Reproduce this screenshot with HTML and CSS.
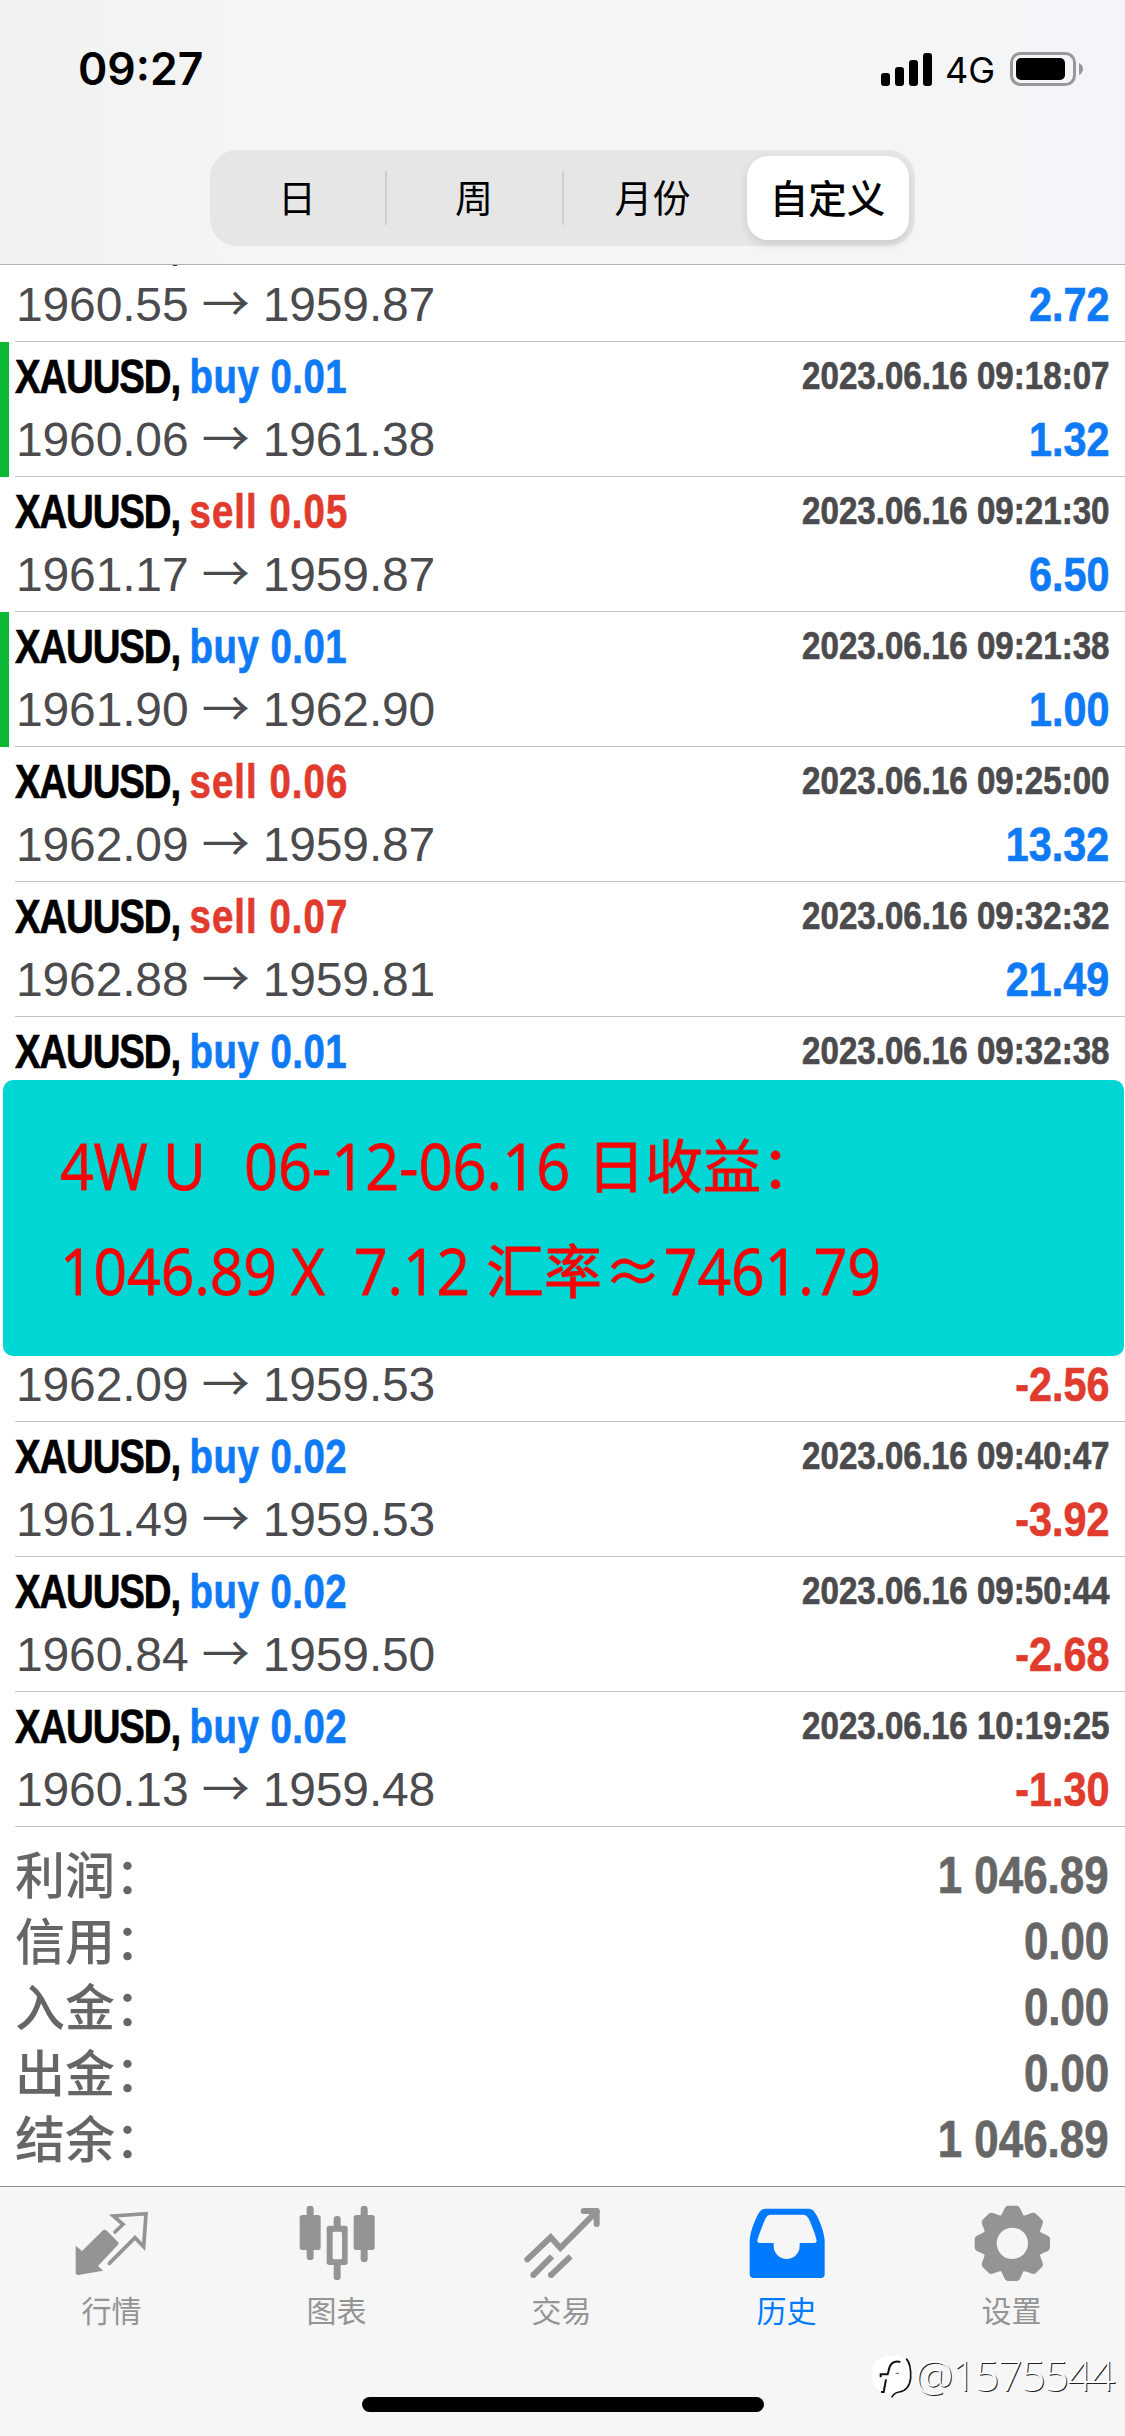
FILE: index.html
```html
<!DOCTYPE html>
<html lang="zh-CN">
  <head>
    <meta charset="UTF-8" />
    <meta name="viewport" content="width=device-width, initial-scale=1.0" />
    <title>历史</title>
    <link rel="stylesheet" href="styles.css" />
  </head>
  <body>
    <header class="header">
      <div class="status">
        <span class="clock">09:27</span>
        <div class="status-right">
          <svg class="signal" width="52" height="33" viewBox="0 0 52 33">
            <rect x="0" y="20" width="9" height="13" rx="3" />
            <rect x="14" y="14" width="9" height="19" rx="3" />
            <rect x="28" y="7" width="9" height="26" rx="3" />
            <rect x="42" y="0" width="9" height="33" rx="3" />
          </svg>
          <span class="network">4G</span>
          <svg class="battery" width="74" height="35" viewBox="0 0 74 35">
            <rect x="1.5" y="1.5" width="63" height="31" rx="9" fill="none" stroke="#98989a" stroke-width="3" />
            <rect x="6" y="6" width="49" height="22" rx="5" />
            <path d="M69 11 Q73 13 73 17 Q73 21 69 23Z" fill="#98989a" />
          </svg>
        </div>
      </div>
      <div class="segment">
        <span class="seg">日</span>
        <span class="seg split">周</span>
        <span class="seg split">月份</span>
        <span class="seg active">自定义</span>
      </div>
    </header>

    <main>
      <!-- Deals above the note -->
      <section class="deals">
        <div class="deal first"><div class="inner">
          <div class="line top"><span class="name">XAUUSD,</span></div>
          <div class="line"><span class="price">1960.55 <i>→</i> 1959.87</span><b class="blue">2.72</b></div>
        </div></div>
        <div class="deal tp"><div class="inner">
          <div class="line top"><span class="name">XAUUSD, <em class="blue">buy 0.01</em></span><time>2023.06.16 09:18:07</time></div>
          <div class="line"><span class="price">1960.06 <i>→</i> 1961.38</span><b class="blue">1.32</b></div>
        </div></div>
        <div class="deal"><div class="inner">
          <div class="line top"><span class="name">XAUUSD, <em class="red">sell 0.05</em></span><time>2023.06.16 09:21:30</time></div>
          <div class="line"><span class="price">1961.17 <i>→</i> 1959.87</span><b class="blue">6.50</b></div>
        </div></div>
        <div class="deal tp"><div class="inner">
          <div class="line top"><span class="name">XAUUSD, <em class="blue">buy 0.01</em></span><time>2023.06.16 09:21:38</time></div>
          <div class="line"><span class="price">1961.90 <i>→</i> 1962.90</span><b class="blue">1.00</b></div>
        </div></div>
        <div class="deal"><div class="inner">
          <div class="line top"><span class="name">XAUUSD, <em class="red">sell 0.06</em></span><time>2023.06.16 09:25:00</time></div>
          <div class="line"><span class="price">1962.09 <i>→</i> 1959.87</span><b class="blue">13.32</b></div>
        </div></div>
        <div class="deal"><div class="inner">
          <div class="line top"><span class="name">XAUUSD, <em class="red">sell 0.07</em></span><time>2023.06.16 09:32:32</time></div>
          <div class="line"><span class="price">1962.88 <i>→</i> 1959.81</span><b class="blue">21.49</b></div>
        </div></div>
        <div class="deal cut"><div class="inner">
          <div class="line top"><span class="name">XAUUSD, <em class="blue">buy 0.01</em></span><time>2023.06.16 09:32:38</time></div>
        </div></div>
      </section>

      <div class="note">
        <p><span class="n1">4W U</span><span class="n2">06-12-06.16</span><span class="cjk">日收益：</span></p>
        <p><span class="n3">1046.89</span><span class="n4">X</span><span class="n5">7.12</span><span class="n6 cjk">汇率</span><span class="n7 cjk">≈</span><span class="n8">7461.79</span></p>
      </div>

      <!-- Deals below the note -->
      <section class="deals">
        <div class="deal"><div class="inner">
          <div class="line"><span class="price">1962.09 <i>→</i> 1959.53</span><b class="red">-2.56</b></div>
        </div></div>
        <div class="deal"><div class="inner">
          <div class="line top"><span class="name">XAUUSD, <em class="blue">buy 0.02</em></span><time>2023.06.16 09:40:47</time></div>
          <div class="line"><span class="price">1961.49 <i>→</i> 1959.53</span><b class="red">-3.92</b></div>
        </div></div>
        <div class="deal"><div class="inner">
          <div class="line top"><span class="name">XAUUSD, <em class="blue">buy 0.02</em></span><time>2023.06.16 09:50:44</time></div>
          <div class="line"><span class="price">1960.84 <i>→</i> 1959.50</span><b class="red">-2.68</b></div>
        </div></div>
        <div class="deal"><div class="inner">
          <div class="line top"><span class="name">XAUUSD, <em class="blue">buy 0.02</em></span><time>2023.06.16 10:19:25</time></div>
          <div class="line"><span class="price">1960.13 <i>→</i> 1959.48</span><b class="red">-1.30</b></div>
        </div></div>
      </section>

      <section class="summary">
        <div class="sum"><span>利润：</span><b>1 046.89</b></div>
        <div class="sum"><span>信用：</span><b>0.00</b></div>
        <div class="sum"><span>入金：</span><b>0.00</b></div>
        <div class="sum"><span>出金：</span><b>0.00</b></div>
        <div class="sum"><span>结余：</span><b>1 046.89</b></div>
      </section>
    </main>

    <footer class="footer">
      <nav class="tabs">
        <div class="tab">
          <svg viewBox="0 0 252 252">
            <path d="M17 137 L36 153 L99 91 Q104 87 109 91 L144 126 Q148 130 144 134 L84 198 L99 212 L25 225 Q17 226 17 218Z" />
            <path d="M135 96 L159 73 L130 48 L228 41 L221 140 L195 113 L118 190" fill="none" stroke="currentColor" stroke-width="11" stroke-linecap="round" />
          </svg>
          <span>行情</span>
        </div>
        <div class="tab">
          <svg viewBox="0 0 252 252">
            <rect x="35" y="17" width="21" height="163" rx="10" />
            <rect x="14" y="45" width="63" height="105" rx="8" />
            <rect x="116" y="48" width="21" height="192" rx="10" />
            <rect x="95" y="77" width="63" height="118" rx="8" />
            <rect x="113" y="95" width="28" height="83" rx="5" fill="#f6f6f6" />
            <rect x="197" y="17" width="21" height="169" rx="10" />
            <rect x="176" y="45" width="63" height="105" rx="8" />
          </svg>
          <span>图表</span>
        </div>
        <div class="tab">
          <svg viewBox="0 0 252 252">
            <g fill="none" stroke="currentColor" stroke-width="18">
              <path d="M22 178 L92 112 L121 144 L230 34" stroke-linecap="round" />
              <path d="M191 33 H230 V72" stroke-linecap="round" stroke-linejoin="round" />
              <path d="M39 226 L96 169" />
              <path d="M92 226 L152 169" />
            </g>
            <circle cx="40" cy="225" r="9" />
            <circle cx="93" cy="225" r="9" />
          </svg>
          <span>交易</span>
        </div>
        <div class="tab active">
          <svg viewBox="0 0 252 252">
            <path fill-rule="evenodd" d="M14 222 V124 C14 98 31 56 42 38 Q50 26 62 26 H191 Q203 26 210 38 C222 56 239 98 239 124 V222 Q239 234 227 234 H26 Q14 234 14 222Z M78 44 H174 Q184 44 190 54 C200 75 213 108 215 122 Q215 129 208 129 H164 V138 A39 39 0 0 1 86 138 V129 H44 Q37 129 37 122 C40 108 53 75 62 54 Q68 44 78 44Z" />
          </svg>
          <span>历史</span>
        </div>
        <div class="tab">
          <svg viewBox="0 0 252 252">
            <defs>
              <path id="tooth" d="M85 56 Q96 45 100 33 Q105 18 113 17 H141 Q149 18 154 33 Q158 45 169 56 L127 130Z" />
            </defs>
            <circle cx="127" cy="130" r="86" />
            <use href="#tooth" />
            <use href="#tooth" transform="rotate(45 127 130)" />
            <use href="#tooth" transform="rotate(90 127 130)" />
            <use href="#tooth" transform="rotate(135 127 130)" />
            <use href="#tooth" transform="rotate(180 127 130)" />
            <use href="#tooth" transform="rotate(225 127 130)" />
            <use href="#tooth" transform="rotate(270 127 130)" />
            <use href="#tooth" transform="rotate(315 127 130)" />
            <circle cx="127" cy="130" r="47" fill="#f6f6f6" />
          </svg>
          <span>设置</span>
        </div>
      </nav>
      <div class="home-bar"></div>
      <div class="watermark">
        <svg width="44" height="46" viewBox="0 0 132 138">
          <path d="M60 5 C95 2 118 18 118 60 C118 95 100 112 82 114 Q70 116 62 128 L58 116 C20 118 2 95 3 60 C4 22 25 6 60 5Z" fill="#fff" />
          <path d="M106 14 C118 28 120 50 119 72 C116 100 100 112 84 114 Q70 116 62 130" fill="none" stroke="#111" stroke-width="5" />
          <path d="M88 24 C66 18 56 32 53 50 L50 61 H29 V70 M45 76 L38 114 H30" fill="none" stroke="#111" stroke-width="6" />
          <path d="M74 58 H84" stroke="#555" stroke-width="3" />
        </svg>
        <span>@1575544</span>
      </div>
    </footer>
  </body>
</html>
```
FILE: styles.css
```css
* {
  box-sizing: border-box;
}
body {
  margin: 0;
  width: 1125px;
  height: 2436px;
  overflow: hidden;
  background-color: #fff;
  color: #000;
  font-family: "Liberation Sans", "Noto Sans CJK SC", sans-serif;
}
p {
  margin: 0;
}
i,
em {
  font-style: normal;
}
.blue {
  color: #0f7af5;
}
.red {
  color: #e03b2d;
}

/* Header */
.header {
  height: 265px;
  border-bottom: 1px solid #b2b2b4;
  background: linear-gradient(90deg, #f0f1f0, #f5f5f6 22%, #f5f5f5 85%, #f3f5fb);
}
.status {
  height: 150px;
  padding: 51px 41px 0 78px;
  display: flex;
  justify-content: space-between;
  align-items: flex-start;
}
.clock {
  font-family: Inter, sans-serif;
  font-weight: 600;
  font-size: 44.5px;
  line-height: 36px;
}
.status-right {
  display: flex;
  align-items: flex-start;
}
.signal {
  margin-top: 2px;
}
.network {
  font-family: Inter, sans-serif;
  font-size: 36px;
  line-height: 36px;
  margin: 1px 15px 0 12px;
}
.battery {
  margin-top: 1px;
}
.segment {
  width: 705px;
  height: 96px;
  margin-left: 210px;
  border-radius: 27px;
  background-color: #e6e6e7;
  display: grid;
  grid-template-columns: 175px 177px 180px 162px;
  align-items: center;
}
.seg {
  font-family: "Noto Sans CJK SC", sans-serif;
  font-weight: 400;
  font-size: 38px;
  line-height: 50px;
  padding: 0 1px 4px 0;
  text-align: center;
}
.seg.split {
  border-left: 2px solid #d0d0d2;
}
.seg.active {
  margin-left: 5px;
  width: 162px;
  height: 84px;
  line-height: 80px;
  font-size: 38.5px;
  font-weight: 500;
  border-radius: 21px;
  background-color: #fff;
  box-shadow: 0 4px 10px rgba(0, 0, 0, 0.12);
}

/* Deals */
.deals {
  overflow: hidden;
}
.deal {
  border-left: 9px solid transparent;
}
.deal.tp {
  border-left-color: #0db834;
}
.deal.first {
  margin-top: -58px;
}
.inner {
  margin-left: 6px;
  padding: 0 16px 8px 0;
  border-bottom: 1px solid #c3c3c5;
}
.line {
  display: flex;
  justify-content: space-between;
  height: 57px;
  line-height: 57px;
  font-size: 48px;
  white-space: nowrap;
}
.line.top {
  height: 69px;
  line-height: 69px;
}
.cut .inner {
  height: 63px;
  padding-bottom: 0;
  border-bottom: none;
}
/* Condensed bold text */
.name,
time,
.line b,
.sum b {
  font-weight: bold;
  transform: scaleX(0.86);
  transform-origin: right;
  -webkit-text-stroke: 0.7px currentColor;
}
.name {
  letter-spacing: -1.4px;
  transform: scaleX(0.8);
  transform-origin: left;
}
.name em {
  letter-spacing: 0.6px;
}
.name em.red {
  letter-spacing: 1.3px;
}
time {
  font-size: 38.5px;
  line-height: 67px;
  color: #4b4b4d;
}
.price {
  padding-left: 1px;
  line-height: 56px;
  letter-spacing: -0.15px;
  color: #4b4b4e;
}
.price i {
  font-family: "Noto Sans CJK SC", sans-serif;
  line-height: 1;
}

/* Note */
.note {
  height: 276px;
  margin: 0 1px 0 3px;
  padding: 33px 0 0 57px;
  border-radius: 10px;
  background-color: #00d6d4;
  color: #f60404;
  font-family: "Open Sans", sans-serif;
  font-weight: 500;
  font-size: 64px;
}
.note p {
  display: flex;
  height: 105px;
  line-height: 105px;
  white-space: nowrap;
}
.note span {
  transform: scaleX(0.917);
  transform-origin: left;
  -webkit-text-stroke: 0.8px currentColor;
}
.note .cjk {
  font-family: "Noto Sans CJK SC", sans-serif;
  font-weight: 400;
  font-size: 58px;
  line-height: 101px;
  transform: none;
}
.n1 {
  width: 184px;
}
.note .n2 {
  width: 343px;
  transform: scaleX(0.93);
}
.n3 {
  width: 231px;
}
.n4 {
  width: 63px;
}
.n5 {
  width: 132px;
}
.n6 {
  width: 118px;
}
.n7 {
  width: 60px;
}

/* Summary */
.summary {
  height: 359px;
  padding: 15px 16px 0 15px;
  color: #666;
}
.sum {
  display: flex;
  justify-content: space-between;
  height: 66px;
  line-height: 68px;
  font-size: 51px;
}
.sum span {
  font-family: "Noto Sans CJK SC", sans-serif;
  font-weight: 500;
  font-size: 50px;
  line-height: 61px;
}

/* Bottom tabs */
.footer {
  position: relative;
  height: 250px;
  border-top: 1px solid #919193;
  background-color: #f6f6f6;
}
.tabs {
  display: flex;
  margin-left: -1px;
  padding-top: 13px;
}
.tab {
  width: 225px;
  display: flex;
  flex-direction: column;
  align-items: center;
  color: #949494;
  font-family: "Noto Sans CJK SC", sans-serif;
  font-size: 30px;
  line-height: 44px;
}
.tab svg {
  width: 84px;
  height: 84px;
  fill: currentColor;
  margin-bottom: 3px;
}
.tab.active {
  color: #007aff;
}
.home-bar {
  width: 402px;
  height: 15px;
  margin: 66px auto 0;
  border-radius: 8px;
  background-color: #000;
}
.watermark {
  position: absolute;
  left: 871px;
  top: 167px;
  display: flex;
  color: #fff;
  font-family: "Open Sans", sans-serif;
  font-weight: 300;
  font-size: 43px;
  letter-spacing: -1.4px;
  line-height: 42px;
  text-shadow: 1px 1px 0 #222;
}
```
